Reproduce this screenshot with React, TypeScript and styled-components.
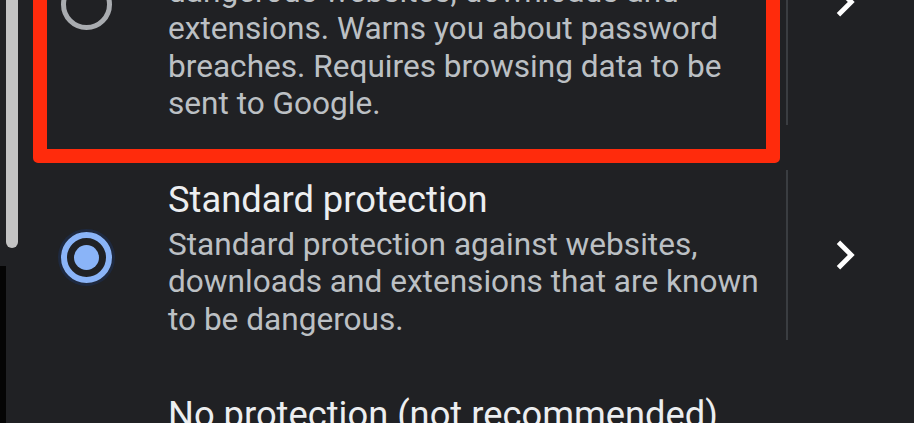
import React from "react";
import styled, { createGlobalStyle } from "styled-components";

const GlobalStyle = createGlobalStyle`
  html, body {
    margin: 0;
    padding: 0;
    background: #202124;
    overflow: hidden;
  }
  body {
    font-family: Roboto, "Noto Sans", "Liberation Sans", sans-serif;
    -webkit-font-smoothing: antialiased;
  }
`;

const Screen = styled.div`
  position: relative;
  width: 914px;
  height: 423px;
  overflow: hidden;
  background: #202124;
`;

const List = styled.div`
  display: flex;
  flex-direction: column;
  gap: 45px;
  margin-top: -121px;
`;

const Row = styled.div`
  position: relative;
  display: flex;
  align-items: stretch;
`;

const Body = styled.div`
  display: flex;
  align-items: center;
  width: 707px;
  padding: 8px 0 2px 61px;
`;

const RadioOuter = styled.div<{ $checked?: boolean }>`
  flex: none;
  box-sizing: border-box;
  width: 51px;
  height: 51px;
  border-radius: 50%;
  border: ${(p) => (p.$checked ? "6px solid #8ab4f8" : "5px solid #a9acb0")};
  display: flex;
  align-items: center;
  justify-content: center;
  margin-right: 56px;
  ${(p) => (p.$checked ? "box-shadow: 0 0 0 3px rgba(30, 44, 70, 0.8);" : "")}
`;

const RadioDot = styled.div`
  width: 25px;
  height: 25px;
  border-radius: 50%;
  background: #8ab4f8;
`;

const Texts = styled.div`
  display: flex;
  flex-direction: column;
  width: 600px;
`;

const Title = styled.div`
  font-size: 36.3px;
  line-height: 44px;
  color: #eceef0;
  margin-bottom: 4px;
  white-space: nowrap;
`;

const Description = styled.div`
  font-size: 31.6px;
  line-height: 37.5px;
  color: #bcc0c4;
`;

const Divider = styled.div`
  flex: none;
  width: 2px;
  margin-left: 18px;
  background: #3a3d41;
`;

const ChevronCell = styled.div`
  flex: none;
  width: 114px;
  display: flex;
  align-items: center;
  justify-content: center;
  color: #ffffff;
`;

const Highlight = styled.div`
  position: absolute;
  left: 33px;
  top: 0;
  width: 747px;
  bottom: -38px;
  box-sizing: border-box;
  border: 14px solid #ff2b0c;
  border-radius: 5px;
  pointer-events: none;
`;

const EdgeBar = styled.div`
  position: absolute;
  left: 6px;
  top: -20px;
  width: 12px;
  height: 268px;
  background: #c3c3c3;
  border-radius: 0 0 7px 7px;
`;

const EdgeStrip = styled.div`
  position: absolute;
  left: 0;
  top: 266px;
  bottom: 0;
  width: 6px;
  background: #050505;
`;

const Chevron = () => (
  <svg width="58" height="58" viewBox="0 0 24 24" aria-hidden="true">
    <path
      fill="currentColor"
      d="M10 6L8.59 7.41 13.17 12l-4.58 4.59L10 18l6-6z"
    />
  </svg>
);

type Option = {
  title: string;
  description?: string;
  checked?: boolean;
  highlighted?: boolean;
  divider?: boolean;
};

const options: Option[] = [
  {
    title: "Enhanced protection",
    description:
      "Faster, proactive protection against dangerous websites, downloads and extensions. Warns you about password breaches. Requires browsing data to be sent to Google.",
    highlighted: true,
    divider: true,
  },
  {
    title: "Standard protection",
    description:
      "Standard protection against websites, downloads and extensions that are known to be dangerous.",
    checked: true,
    divider: true,
  },
  {
    title: "No protection (not recommended)",
    description:
      "Does not protect you against dangerous websites, downloads and extensions.",
  },
];

export default function App() {
  return (
    <>
      <GlobalStyle />
      <Screen>
        <List>
          {options.map((o) => (
            <Row key={o.title}>
              <Body>
                <RadioOuter $checked={o.checked}>
                  {o.checked && <RadioDot />}
                </RadioOuter>
                <Texts>
                  <Title>{o.title}</Title>
                  {o.description && <Description>{o.description}</Description>}
                </Texts>
              </Body>
              {o.divider && (
                <>
                  <Divider />
                  <ChevronCell>
                    <Chevron />
                  </ChevronCell>
                </>
              )}
              {o.highlighted && <Highlight />}
            </Row>
          ))}
        </List>
        <EdgeBar />
        <EdgeStrip />
      </Screen>
    </>
  );
}
